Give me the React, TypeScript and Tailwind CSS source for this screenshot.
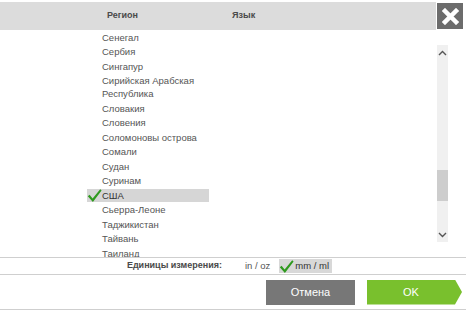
import React from "react";

const items: { name: string; lines?: string[]; selected?: boolean }[] = [
  { name: "Сенегал" },
  { name: "Сербия" },
  { name: "Сингапур" },
  { name: "Сирийская Арабская Республика", lines: ["Сирийская Арабская", "Республика"] },
  { name: "Словакия" },
  { name: "Словения" },
  { name: "Соломоновы острова" },
  { name: "Сомали" },
  { name: "Судан" },
  { name: "Суринам" },
  { name: "США", selected: true },
  { name: "Сьерра-Леоне" },
  { name: "Таджикистан" },
  { name: "Тайвань" },
  { name: "Таиланд" },
  { name: "Танзания" },
];

function Check() {
  return (
    <svg width="15" height="15" viewBox="0 0 15 15" className="shrink-0">
      <path d="M0.8 8.2 L2.6 6.8 L5.6 10.6 L13.2 1.2 L14.6 2.4 L5.9 14 Z" fill="#2f9a1f" />
    </svg>
  );
}

export default function App() {
  return (
    <div
      className="w-[466px] h-[311px] bg-white overflow-hidden flex flex-col text-[9.5px] text-[#555]"
      style={{ fontFamily: '"Liberation Sans", Arial, sans-serif' }}
    >
      {/* header */}
      <div className="flex pt-[2px] h-[30px] shrink-0">
        <div className="w-[436px] h-[28px] bg-[#dcdcdc] flex items-center font-bold text-[9px] text-[#4a4a4a]">
          <span className="ml-[107px] w-[125px]">Регион</span>
          <span>Язык</span>
        </div>
        <div className="ml-[1px] mt-[1px] w-[26px] h-[26px] bg-[#6c6c6c] flex items-center justify-center">
          <svg width="17" height="17" viewBox="0 0 17 17">
            <path d="M3 3 L14 14 M14 3 L3 14" stroke="#fff" strokeWidth="4.5" strokeLinecap="square" />
          </svg>
        </div>
      </div>

      {/* list */}
      <div className="flex h-[227px] shrink-0">
        <div className="w-[437px] overflow-hidden">
          {items.map((it) => (
            <div key={it.name} className="flex py-[0.75px] leading-[13px]">
              <div className="w-[87px] shrink-0" />
              {it.selected ? (
                <div className="w-[122px] bg-[#d6d6d6] flex relative h-[13px]">
                  <div className="absolute left-[0px] top-[-1px]">
                    <Check />
                  </div>
                  <span className="ml-[15px] text-[#333]">{it.name}</span>
                </div>
              ) : (
                <div className="ml-[15px]">
                  {(it.lines ?? [it.name]).map((l) => (
                    <div key={l}>{l}</div>
                  ))}
                </div>
              )}
            </div>
          ))}
        </div>
        <div className="w-[11px] mt-[15px] h-[197px] bg-[#f0f0f0] flex flex-col items-center">
          <svg width="9" height="6" viewBox="0 0 9 6" className="mt-[5px]">
            <path d="M1 5 L4.5 1.5 L8 5" stroke="#555" strokeWidth="1.4" fill="none" />
          </svg>
          <div className="mt-[114px] w-[11px] h-[31px] bg-[#cdcdcd]" />
          <svg width="9" height="6" viewBox="0 0 9 6" className="mt-[31px]">
            <path d="M1 1 L4.5 4.5 L8 1" stroke="#555" strokeWidth="1.4" fill="none" />
          </svg>
        </div>
      </div>

      {/* units */}
      <div className="h-[18px] shrink-0 border-t-[1px] border-b-[1px] border-[#cfcfcf] flex items-center whitespace-nowrap">
        <span className="w-[222px] text-right font-bold text-[9px] text-[#4a4a4a]">Единицы измерения:</span>
        <span className="ml-[23px]">in / oz</span>
        <div className="ml-[9px] h-[14px] w-[53px] bg-[#d8d8d8] flex items-center text-[#333]">
          <Check />
          <span className="ml-[1px]">mm / ml</span>
        </div>
      </div>

      {/* buttons */}
      <div className="h-[35px] shrink-0 border-b-[1px] border-[#cfcfcf] flex items-center">
        <div className="ml-[266px] w-[89px] h-[25px] bg-[#777777] text-white text-[11px] flex items-center justify-center">
          Отмена
        </div>
        <div className="ml-[12px] w-[95px] h-[25px] bg-[#79c02d] text-white text-[11px] flex items-center justify-center pr-[7px] [clip-path:polygon(0_0,calc(100%-7px)_0,100%_50%,calc(100%-7px)_100%,0_100%)]">
          OK
        </div>
      </div>
    </div>
  );
}
